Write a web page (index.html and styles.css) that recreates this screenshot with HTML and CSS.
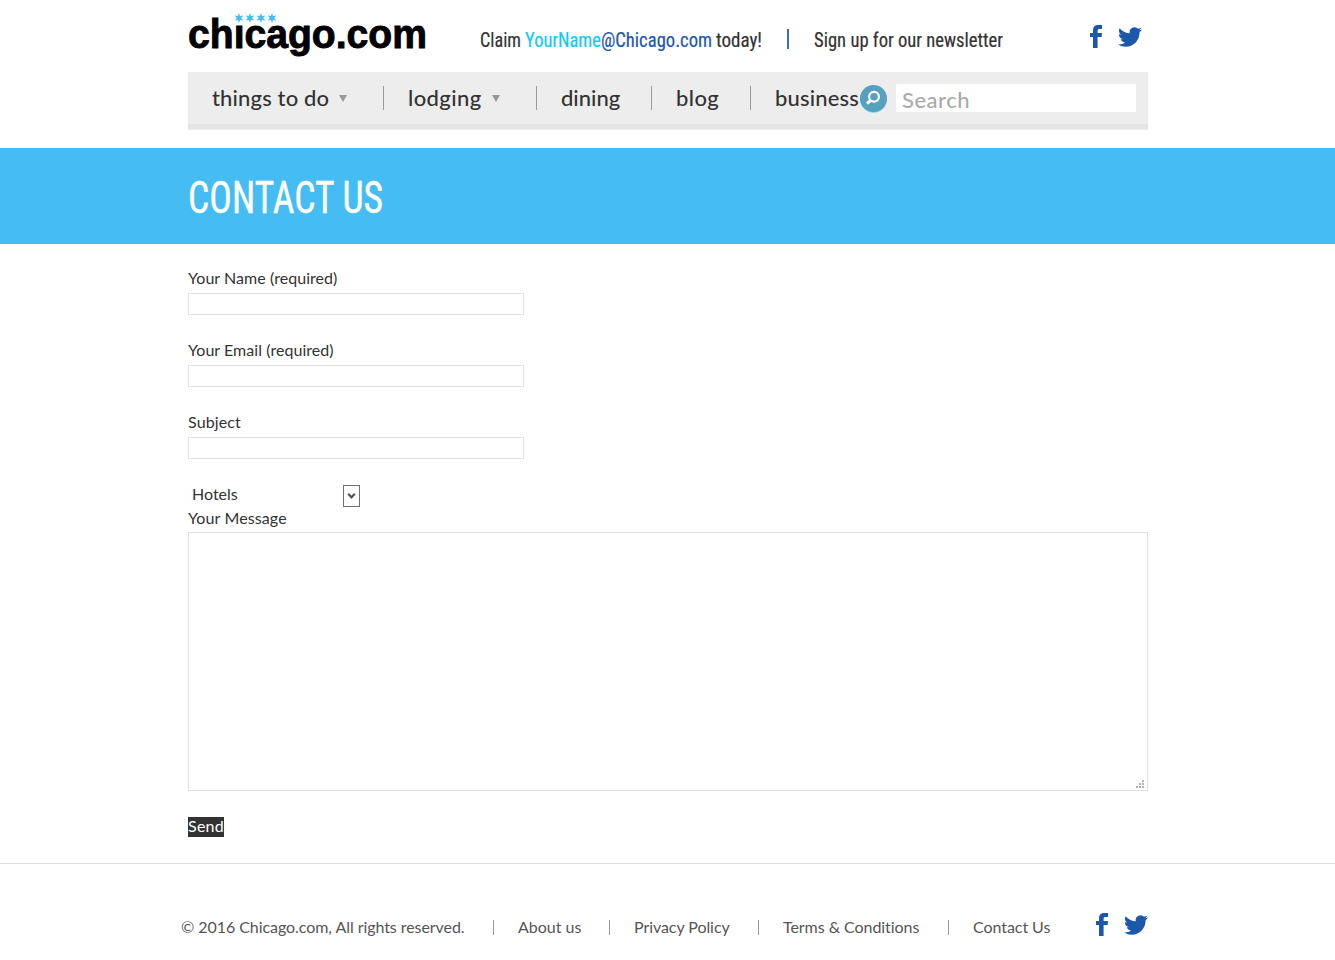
FILE: index.html
```html
<!DOCTYPE html>
<html lang="en">
<head>
<meta charset="utf-8">
<title>Contact Us - Chicago.com</title>
<link rel="stylesheet" href="styles.css">
</head>
<body>
<svg class="defs" width="0" height="0">
  <symbol id="facebook" viewBox="0 0 12 23"><path d="M3 23V12H0V8h3V5.500C3 1.800 5 0 8.500 0H12v4H9.800C8.200 4 7.600 4.600 7.600 6v2H12l-.4 4h-4v11z"/></symbol>
  <symbol id="twitter" viewBox="0 2.200 24 19.600"><path d="M23.953 4.570a10 10 0 01-2.825.775 4.958 4.958 0 002.163-2.723c-.951.555-2.005.959-3.127 1.184a4.920 4.920 0 00-8.384 4.482C7.690 8.095 4.067 6.130 1.640 3.162a4.822 4.822 0 00-.666 2.475c0 1.710.87 3.213 2.188 4.096a4.904 4.904 0 01-2.228-.616v.06a4.923 4.923 0 003.946 4.827 4.996 4.996 0 01-2.212.085 4.936 4.936 0 004.604 3.417 9.867 9.867 0 01-6.102 2.105c-.39 0-.779-.023-1.170-.067a13.995 13.995 0 007.557 2.209c9.053 0 13.998-7.496 13.998-13.985 0-.21 0-.42-.015-.63A9.935 9.935 0 0024 4.590z"/></symbol>
  <symbol id="star" viewBox="-5 -5 10 10"><path d="M0-5 1.100-1.900 4.330-2.500 2.200 0 4.330 2.500 1.100 1.900 0 5-1.100 1.900-4.330 2.500-2.200 0-4.330-2.500-1.100-1.900z"/></symbol>
</svg>
<header class="wrap header">
  <div class="top">
    <svg class="logo" width="240" height="60" viewBox="0 0 240 60">
      <text class="logo-text" x="0" y="48" textLength="239" lengthAdjust="spacingAndGlyphs">ch&#305;cago.com</text>
      <g class="stars">
        <use href="#star" x="46" y="13" width="10" height="10"/>
        <use href="#star" x="57" y="13" width="10" height="10"/>
        <use href="#star" x="68" y="13" width="10" height="10"/>
        <use href="#star" x="79" y="13" width="10" height="10"/>
      </g>
    </svg>
    <svg class="claim" width="282" height="40" viewBox="0 0 282 40">
      <text class="narrow" x="0" y="27" textLength="41" lengthAdjust="spacingAndGlyphs">Claim</text>
      <text class="narrow cyan" x="45" y="27" textLength="76" lengthAdjust="spacingAndGlyphs">YourName</text>
      <text class="narrow blue" x="121" y="27" textLength="111" lengthAdjust="spacingAndGlyphs">@Chicago.com</text>
      <text class="narrow" x="236" y="27" textLength="46" lengthAdjust="spacingAndGlyphs">today!</text>
    </svg>
    <span class="bar"></span>
    <svg class="newsletter" width="190" height="40" viewBox="0 0 190 40">
      <text class="narrow" x="0" y="27" textLength="189" lengthAdjust="spacingAndGlyphs">Sign up for our newsletter</text>
    </svg>
    <div class="social">
      <svg width="12" height="23"><use href="#facebook"/></svg>
      <svg width="24" height="20"><use href="#twitter"/></svg>
    </div>
  </div>
  <nav class="nav">
    <a class="n1"><span class="t1">things to do</span><i class="caret"></i></a>
    <a class="n2"><span class="t2">lodging</span><i class="caret"></i></a>
    <a class="n3"><span class="t3">dining</span></a>
    <a class="n4"><span class="t4">blog</span></a>
    <a class="n5"><span class="t5">business</span></a>
    <svg class="search-icon" width="27" height="28" viewBox="0 0 27 28">
      <circle cx="13.500" cy="14.300" r="13.400" fill="#7fd3f5"/>
      <circle cx="13.500" cy="13.500" r="13.500" fill="#56a1bd"/>
      <circle cx="14" cy="11.800" r="4.900" fill="none" stroke="#fff" stroke-width="2.200"/>
      <path d="M10.800 15.200 7 18.600" stroke="#fff" stroke-width="3"/>
    </svg>
    <input class="search" placeholder="Search">
  </nav>
</header>
<section class="banner">
  <div class="wrap">
    <svg width="200" height="96" viewBox="0 0 200 96">
      <text class="title" x="0" y="65" textLength="195" lengthAdjust="spacingAndGlyphs">CONTACT US</text>
    </svg>
  </div>
</section>
<main class="wrap form">
  <label class="field"><span class="l1">Your Name (required)</span><input></label>
  <label class="field"><span class="l2">Your Email (required)</span><input></label>
  <label class="field"><span class="l3">Subject</span><input></label>
  <div class="select"><span class="l4">Hotels</span>
    <svg width="17" height="22" viewBox="0 0 17 22"><rect x=".5" y=".5" width="16" height="21" fill="#fff" stroke="#707070"/><path d="M5.200 8.800 8.500 12.300l3.300-3.500" fill="none" stroke="#555" stroke-width="2.200"/></svg>
  </div>
  <label class="message"><span class="l5">Your Message</span><textarea></textarea>
    <svg class="grip" width="8" height="8" fill="#b0b0b0"><path d="M6 0h2v2h-2zM3 3h2v2h-2zM6 3h2v2h-2zM0 6h2v2h-2zM3 6h2v2h-2zM6 6h2v2h-2z"/></svg>
  </label>
  <button class="send">Send</button>
</main>
<footer class="footer">
  <div class="links">
    <span class="f1"><span class="c1">© 2016 Chicago.com, All rights reserved.</span></span>
    <a class="f2"><span class="c2">About us</span></a>
    <a class="f3"><span class="c3">Privacy Policy</span></a>
    <a class="f4"><span class="c4">Terms &amp; Conditions</span></a>
    <a class="f5"><span class="c5">Contact Us</span></a>
    <div class="social">
      <svg width="12" height="23"><use href="#facebook"/></svg>
      <svg width="24" height="20"><use href="#twitter"/></svg>
    </div>
  </div>
</footer>
</body>
</html>
```
FILE: styles.css
```css
* { box-sizing: border-box; }
body { margin: 0; background: #fff; color: #333; font: 16px/24px Lato, sans-serif; font-variant-ligatures: none; overflow: hidden; }
svg { display: block; flex: none; overflow: visible; }
.defs { position: absolute; }
.wrap { width: 960px; margin-left: 188px; }
.header { height: 148px; }
.top { display: flex; height: 72px; }
.logo-text { font: bold 40px "Liberation Sans", Arial, sans-serif; fill: #000; stroke: #000; stroke-width: .9; }
.stars { fill: #45bdf3; }
.claim { margin: 20px 0 0 52px; }
.narrow { font: 20.500px "Liberation Sans Narrow", "Roboto Condensed", Roboto, sans-serif; fill: #333; stroke: #333; stroke-width: .2; }
.cyan { fill: #14c8f8; stroke: #14c8f8; }
.blue { fill: #1d57ab; stroke: #1d57ab; }
.bar { width: 2px; height: 20px; margin: 29px 0 0 25px; background: #3b6fb5; flex: none; }
.newsletter { margin: 20px 0 0 25px; }
.social { display: flex; align-items: center; gap: 16px; fill: #1d57ab; }
.top .social { margin: 25px 0 0 86px; height: 23px; }
.nav { display: flex; height: 57px; background: #ededed; border-bottom: 5px solid #e4e4e4; box-shadow: 0 1px 1px #eee; font-size: 22px; font-weight: 500; white-space: nowrap; }
.nav a { display: flex; height: 24px; margin-top: 14px; padding-left: 24px; border-right: 1px solid #999; line-height: 24px; flex: none; }
.nav .n1 { width: 196px; }
.nav .n2 { width: 153px; }
.nav .n3 { width: 115px; }
.nav .n4 { width: 99px; }
.nav .n5 { width: 109px; border: 0; }
.caret { width: 0; height: 0; margin: 9px 0 0 10px; border: 4px solid transparent; border-top: 7px solid #999; border-bottom: 0; }
.t1 { width: 117px; letter-spacing: .15px; }
.t2 { width: 74px; letter-spacing: .4px; }
.t4 { letter-spacing: .4px; }
.t5 { letter-spacing: .15px; }
.search-icon { margin-top: 13px; }
.search { width: 240px; height: 28px; margin: 12px 0 0 9px; padding: 2px 6px 0; border: 0; font: 500 22px/24px Lato, sans-serif; letter-spacing: .5px; }
.search::placeholder { color: #aaa; }
.banner { height: 96px; background: #45bdf3; }
.title { font: 45px "Liberation Sans Narrow", "Roboto Condensed", Roboto, sans-serif; fill: #fff; stroke: #fff; stroke-width: .4; }
.form { padding-top: 22px; }
.field { display: block; height: 72px; }
.field span, .message span { display: block; height: 27px; }
.field input { display: block; width: 336px; height: 22px; border: 1px solid #e1e1e1; }
.l1, .l2 { letter-spacing: .05px; }
.l3, .l5 { letter-spacing: .12px; }
.select { display: flex; width: 172px; height: 24px; padding-left: 4px; justify-content: space-between; }
.select svg { margin-top: 3px; }
.message { display: block; position: relative; }
.message span { height: 26px; }
.message textarea { display: block; width: 960px; height: 259px; border: 1px solid #e1e1e1; resize: none; }
.grip { position: absolute; right: 4px; bottom: 3px; }
.send { display: block; width: 36px; height: 20px; margin-top: 26px; padding: 0 0 2px; border: 0; background: #333; color: #fff; font: 16px/18px Lato, sans-serif; letter-spacing: .2px; white-space: nowrap; }
.footer { height: 97px; margin-top: 26px; border-top: 1px solid #e1e1e1; color: #555; white-space: nowrap; }
.links { display: flex; padding: 49px 0 0 181px; }
.links > a, .links > .f1 { height: 15px; margin-top: 7px; line-height: 13px; border-right: 1px solid #999; flex: none; }
.links > a { padding-left: 24px; }
.links .f1 { width: 313px; }
.links .f2 { width: 116px; }
.links .f3 { width: 149px; }
.links .f4 { width: 190px; }
.links .f5 { width: 102px; border: 0; }
.c1, .c3, .c5 { letter-spacing: -.06px; }
.c4 { letter-spacing: -.05px; }
.footer .social { margin-left: 45px; height: 23px; }
```
